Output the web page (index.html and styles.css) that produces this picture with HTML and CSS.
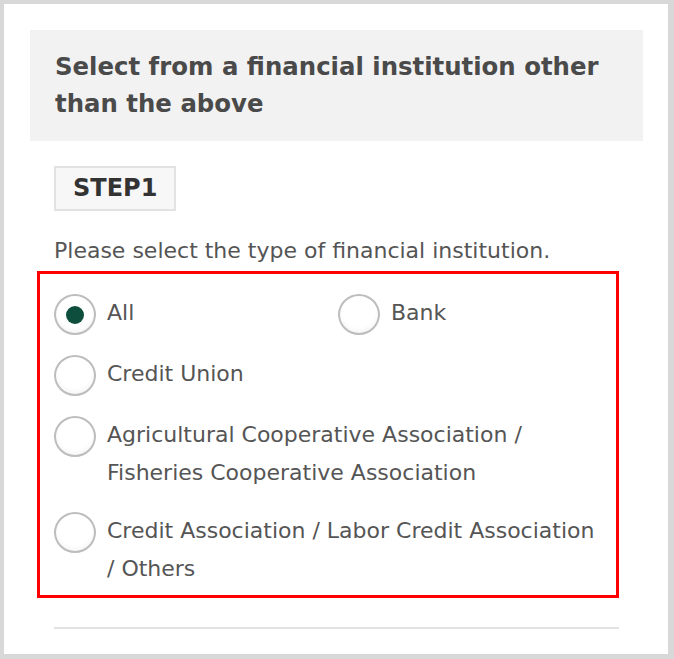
FILE: index.html
```html
<!DOCTYPE html>
<html lang="en">

<head>
	<meta charset="UTF-8">
	<meta name="viewport" content="width=device-width, initial-scale=1.0">
	<title>Select a financial institution</title>
	<link rel="stylesheet" href="styles.css">
</head>

<body>
	<div class="frame">
		<h2 class="title">Select from a financial institution other than the above</h2>

		<div class="content">
			<div class="step">STEP1</div>

			<p class="lead">Please select the type of financial institution.</p>

			<div class="choices">
				<label class="choice half">
					<input type="radio" name="type" checked>
					<span class="dot"></span>
					<span class="text">All</span>
				</label>
				<label class="choice rest">
					<input type="radio" name="type">
					<span class="dot"></span>
					<span class="text">Bank</span>
				</label>
				<label class="choice">
					<input type="radio" name="type">
					<span class="dot"></span>
					<span class="text">Credit Union</span>
				</label>
				<label class="choice">
					<input type="radio" name="type">
					<span class="dot"></span>
					<span class="text">Agricultural Cooperative Association /<br>Fisheries Cooperative Association</span>
				</label>
				<label class="choice">
					<input type="radio" name="type">
					<span class="dot"></span>
					<span class="text">Credit Association / Labor Credit Association<br>/ Others</span>
				</label>
			</div>

			<hr class="rule">
		</div>
	</div>
</body>
</html>
```

FILE: styles.css
```css
html, body {
	margin: 0;
	background-color: white;
}

body {
	font-family: "DejaVu Sans", Verdana, sans-serif;
	color: #555;
}

.frame {
	box-sizing: border-box;
	height: 659px;
	border: 4px solid #d8d8d8;
	border-right-width: 6px;
	border-bottom-width: 5px;
	padding: 26px 25px 0 26px;
}

.title {
	margin: 0;
	background-color: #f2f2f2;
	color: #4a4a4a;
	font-size: 24.4px;
	line-height: 37px;
	padding: 18px 25px 19px 25px;
}

.content {
	padding: 25px 24px 0 24px;
}

.step {
	display: inline-block;
	font-size: 24px;
	font-weight: bold;
	color: #333;
	line-height: 41px;
	padding: 0 17px;
	background-color: #f7f7f7;
	border: 2px solid #e2e2e2;
}

.lead {
	margin: 25px 0 5px 0;
	font-size: 22px;
	line-height: 30px;
}

.choices {
	display: flex;
	flex-wrap: wrap;
	margin-left: -17px;
	border: 3px solid #f00;
	padding: 20px 14px 7px 14px;
	row-gap: 20px;
}

.choice {
	display: flex;
	align-items: flex-start;
	width: 100%;
	font-size: 22px;
	line-height: 38px;
	color: #555;
	cursor: pointer;
}

.choice.half {
	width: 284px;
}

.choice.rest {
	width: auto;
	flex: 1;
}

.choice input {
	display: none;
}

.dot {
	flex: none;
	box-sizing: border-box;
	width: 42px;
	height: 41px;
	margin: 0 11px 0 0;
	border-radius: 50%;
	border: 2px solid #bdbdbd;
	background: radial-gradient(circle at 50% 40%, #fff 55%, #ececec 100%);
	display: flex;
	align-items: center;
	justify-content: center;
}

.choice input:checked + .dot::after {
	content: "";
	width: 18px;
	height: 18px;
	border-radius: 50%;
	background-color: #0d4f3c;
}

.rule {
	margin: 29px 0 0 0;
	border: none;
	border-top: 2px solid #e3e3e3;
}
```
